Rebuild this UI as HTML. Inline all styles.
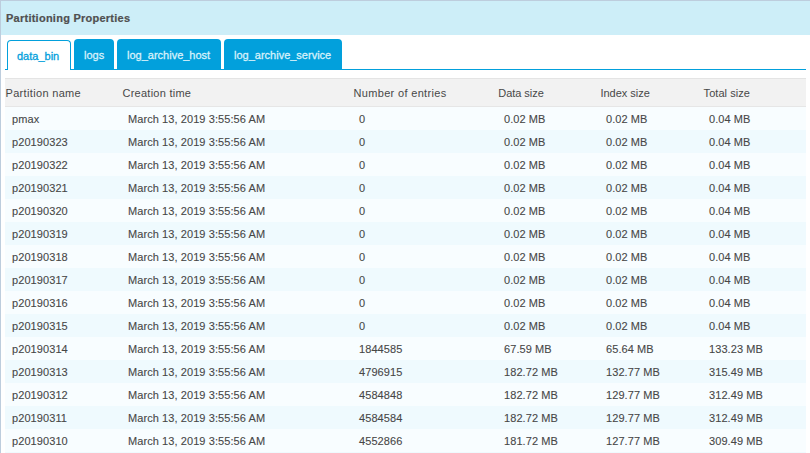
<!DOCTYPE html>
<html><head><meta charset="utf-8"><style>
*{margin:0;padding:0;box-sizing:border-box}
html,body{width:810px;height:453px;overflow:hidden;background:#fff}
body{position:relative;font-family:"Liberation Sans",sans-serif;}
.a{position:absolute;white-space:nowrap}
#bt{left:0;top:0;width:810px;height:1px;background:#bdcddd}
#bl{left:0;top:0;width:1px;height:453px;background:#bdcddd}
#title{left:1px;top:1px;width:809px;height:34px;background:#cdeef8}
#ttl{left:6px;top:11px;font-weight:bold;font-size:11px;line-height:14px;color:#505050;letter-spacing:0.25px;-webkit-text-stroke:0.2px #505050}
#line{left:5px;top:69px;width:801px;height:1px;background:#02a0dc}
.tab{position:absolute;top:39px;height:31px;background:#02a0dc;border-radius:4px 4px 0 0;color:#d6f1fb;font-size:11px;line-height:13px}
.tab span{position:absolute;top:10px;left:10px;-webkit-text-stroke:0.3px #d6f1fb}
#act{position:absolute;left:7px;top:40px;width:64px;height:30px;border:1px solid #02a0dc;border-bottom:none;border-radius:4px 4px 0 0;background:#fff;color:#02a0dc;font-size:11px;line-height:13px}
#act span{position:absolute;top:9px;left:9px;-webkit-text-stroke:0.3px #02a0dc}
#hdr{left:5px;top:78px;width:801px;height:29px;background:#f2f2f2;border-top:1px solid #e4e4e4;border-bottom:1px solid #e6e6e6}
.h{position:absolute;top:87px;font-size:11px;line-height:13px;color:#484848}
.r{position:absolute;left:5px;width:801px;height:23px}
.odd{background:#f8fdff}
.even{background:#effafe}
.d{position:absolute;font-size:11px;line-height:13px;color:#474747;-webkit-text-stroke:0.1px #474747;letter-spacing:0.08px}
</style></head><body>
<div class="a" id="title"></div>
<div class="a" id="bt"></div>
<div class="a" id="bl"></div>
<div class="a" id="ttl">Partitioning Properties</div>
<div class="a" id="line"></div>
<div id="act"><span>data_bin</span></div>
<div class="tab" style="left:74px;width:40px"><span>logs</span></div>
<div class="tab" style="left:117px;width:104px"><span>log_archive_host</span></div>
<div class="tab" style="left:224px;width:118px"><span>log_archive_service</span></div>
<div class="a" id="hdr"></div>
<div class="h" style="left:5.5px;letter-spacing:0.33px">Partition name</div>
<div class="h" style="left:122.5px;letter-spacing:0.25px">Creation time</div>
<div class="h" style="left:353.5px;letter-spacing:0.33px">Number of entries</div>
<div class="h" style="left:498.3px;letter-spacing:-0.05px">Data size</div>
<div class="h" style="left:600.4px;letter-spacing:0px">Index size</div>
<div class="h" style="left:703.6px;letter-spacing:0.05px">Total size</div>
<div class="r odd" style="top:107px"></div>
<div class="d" style="left:12px;top:113px">pmax</div>
<div class="d" style="left:128px;top:113px">March 13, 2019 3:55:56 AM</div>
<div class="d" style="left:359px;top:113px">0</div>
<div class="d" style="left:504px;top:113px">0.02 MB</div>
<div class="d" style="left:606px;top:113px">0.02 MB</div>
<div class="d" style="left:709px;top:113px">0.04 MB</div>
<div class="r even" style="top:130px"></div>
<div class="d" style="left:12px;top:136px">p20190323</div>
<div class="d" style="left:128px;top:136px">March 13, 2019 3:55:56 AM</div>
<div class="d" style="left:359px;top:136px">0</div>
<div class="d" style="left:504px;top:136px">0.02 MB</div>
<div class="d" style="left:606px;top:136px">0.02 MB</div>
<div class="d" style="left:709px;top:136px">0.04 MB</div>
<div class="r odd" style="top:153px"></div>
<div class="d" style="left:12px;top:159px">p20190322</div>
<div class="d" style="left:128px;top:159px">March 13, 2019 3:55:56 AM</div>
<div class="d" style="left:359px;top:159px">0</div>
<div class="d" style="left:504px;top:159px">0.02 MB</div>
<div class="d" style="left:606px;top:159px">0.02 MB</div>
<div class="d" style="left:709px;top:159px">0.04 MB</div>
<div class="r even" style="top:176px"></div>
<div class="d" style="left:12px;top:182px">p20190321</div>
<div class="d" style="left:128px;top:182px">March 13, 2019 3:55:56 AM</div>
<div class="d" style="left:359px;top:182px">0</div>
<div class="d" style="left:504px;top:182px">0.02 MB</div>
<div class="d" style="left:606px;top:182px">0.02 MB</div>
<div class="d" style="left:709px;top:182px">0.04 MB</div>
<div class="r odd" style="top:199px"></div>
<div class="d" style="left:12px;top:205px">p20190320</div>
<div class="d" style="left:128px;top:205px">March 13, 2019 3:55:56 AM</div>
<div class="d" style="left:359px;top:205px">0</div>
<div class="d" style="left:504px;top:205px">0.02 MB</div>
<div class="d" style="left:606px;top:205px">0.02 MB</div>
<div class="d" style="left:709px;top:205px">0.04 MB</div>
<div class="r even" style="top:222px"></div>
<div class="d" style="left:12px;top:228px">p20190319</div>
<div class="d" style="left:128px;top:228px">March 13, 2019 3:55:56 AM</div>
<div class="d" style="left:359px;top:228px">0</div>
<div class="d" style="left:504px;top:228px">0.02 MB</div>
<div class="d" style="left:606px;top:228px">0.02 MB</div>
<div class="d" style="left:709px;top:228px">0.04 MB</div>
<div class="r odd" style="top:245px"></div>
<div class="d" style="left:12px;top:251px">p20190318</div>
<div class="d" style="left:128px;top:251px">March 13, 2019 3:55:56 AM</div>
<div class="d" style="left:359px;top:251px">0</div>
<div class="d" style="left:504px;top:251px">0.02 MB</div>
<div class="d" style="left:606px;top:251px">0.02 MB</div>
<div class="d" style="left:709px;top:251px">0.04 MB</div>
<div class="r even" style="top:268px"></div>
<div class="d" style="left:12px;top:274px">p20190317</div>
<div class="d" style="left:128px;top:274px">March 13, 2019 3:55:56 AM</div>
<div class="d" style="left:359px;top:274px">0</div>
<div class="d" style="left:504px;top:274px">0.02 MB</div>
<div class="d" style="left:606px;top:274px">0.02 MB</div>
<div class="d" style="left:709px;top:274px">0.04 MB</div>
<div class="r odd" style="top:291px"></div>
<div class="d" style="left:12px;top:297px">p20190316</div>
<div class="d" style="left:128px;top:297px">March 13, 2019 3:55:56 AM</div>
<div class="d" style="left:359px;top:297px">0</div>
<div class="d" style="left:504px;top:297px">0.02 MB</div>
<div class="d" style="left:606px;top:297px">0.02 MB</div>
<div class="d" style="left:709px;top:297px">0.04 MB</div>
<div class="r even" style="top:314px"></div>
<div class="d" style="left:12px;top:320px">p20190315</div>
<div class="d" style="left:128px;top:320px">March 13, 2019 3:55:56 AM</div>
<div class="d" style="left:359px;top:320px">0</div>
<div class="d" style="left:504px;top:320px">0.02 MB</div>
<div class="d" style="left:606px;top:320px">0.02 MB</div>
<div class="d" style="left:709px;top:320px">0.04 MB</div>
<div class="r odd" style="top:337px"></div>
<div class="d" style="left:12px;top:343px">p20190314</div>
<div class="d" style="left:128px;top:343px">March 13, 2019 3:55:56 AM</div>
<div class="d" style="left:359px;top:343px">1844585</div>
<div class="d" style="left:504px;top:343px">67.59 MB</div>
<div class="d" style="left:606px;top:343px">65.64 MB</div>
<div class="d" style="left:709px;top:343px">133.23 MB</div>
<div class="r even" style="top:360px"></div>
<div class="d" style="left:12px;top:366px">p20190313</div>
<div class="d" style="left:128px;top:366px">March 13, 2019 3:55:56 AM</div>
<div class="d" style="left:359px;top:366px">4796915</div>
<div class="d" style="left:504px;top:366px">182.72 MB</div>
<div class="d" style="left:606px;top:366px">132.77 MB</div>
<div class="d" style="left:709px;top:366px">315.49 MB</div>
<div class="r odd" style="top:383px"></div>
<div class="d" style="left:12px;top:389px">p20190312</div>
<div class="d" style="left:128px;top:389px">March 13, 2019 3:55:56 AM</div>
<div class="d" style="left:359px;top:389px">4584848</div>
<div class="d" style="left:504px;top:389px">182.72 MB</div>
<div class="d" style="left:606px;top:389px">129.77 MB</div>
<div class="d" style="left:709px;top:389px">312.49 MB</div>
<div class="r even" style="top:406px"></div>
<div class="d" style="left:12px;top:412px">p20190311</div>
<div class="d" style="left:128px;top:412px">March 13, 2019 3:55:56 AM</div>
<div class="d" style="left:359px;top:412px">4584584</div>
<div class="d" style="left:504px;top:412px">182.72 MB</div>
<div class="d" style="left:606px;top:412px">129.77 MB</div>
<div class="d" style="left:709px;top:412px">312.49 MB</div>
<div class="r odd" style="top:429px"></div>
<div class="d" style="left:12px;top:435px">p20190310</div>
<div class="d" style="left:128px;top:435px">March 13, 2019 3:55:56 AM</div>
<div class="d" style="left:359px;top:435px">4552866</div>
<div class="d" style="left:504px;top:435px">181.72 MB</div>
<div class="d" style="left:606px;top:435px">127.77 MB</div>
<div class="d" style="left:709px;top:435px">309.49 MB</div>
<div class="r even" style="top:452px"></div>
</body></html>
